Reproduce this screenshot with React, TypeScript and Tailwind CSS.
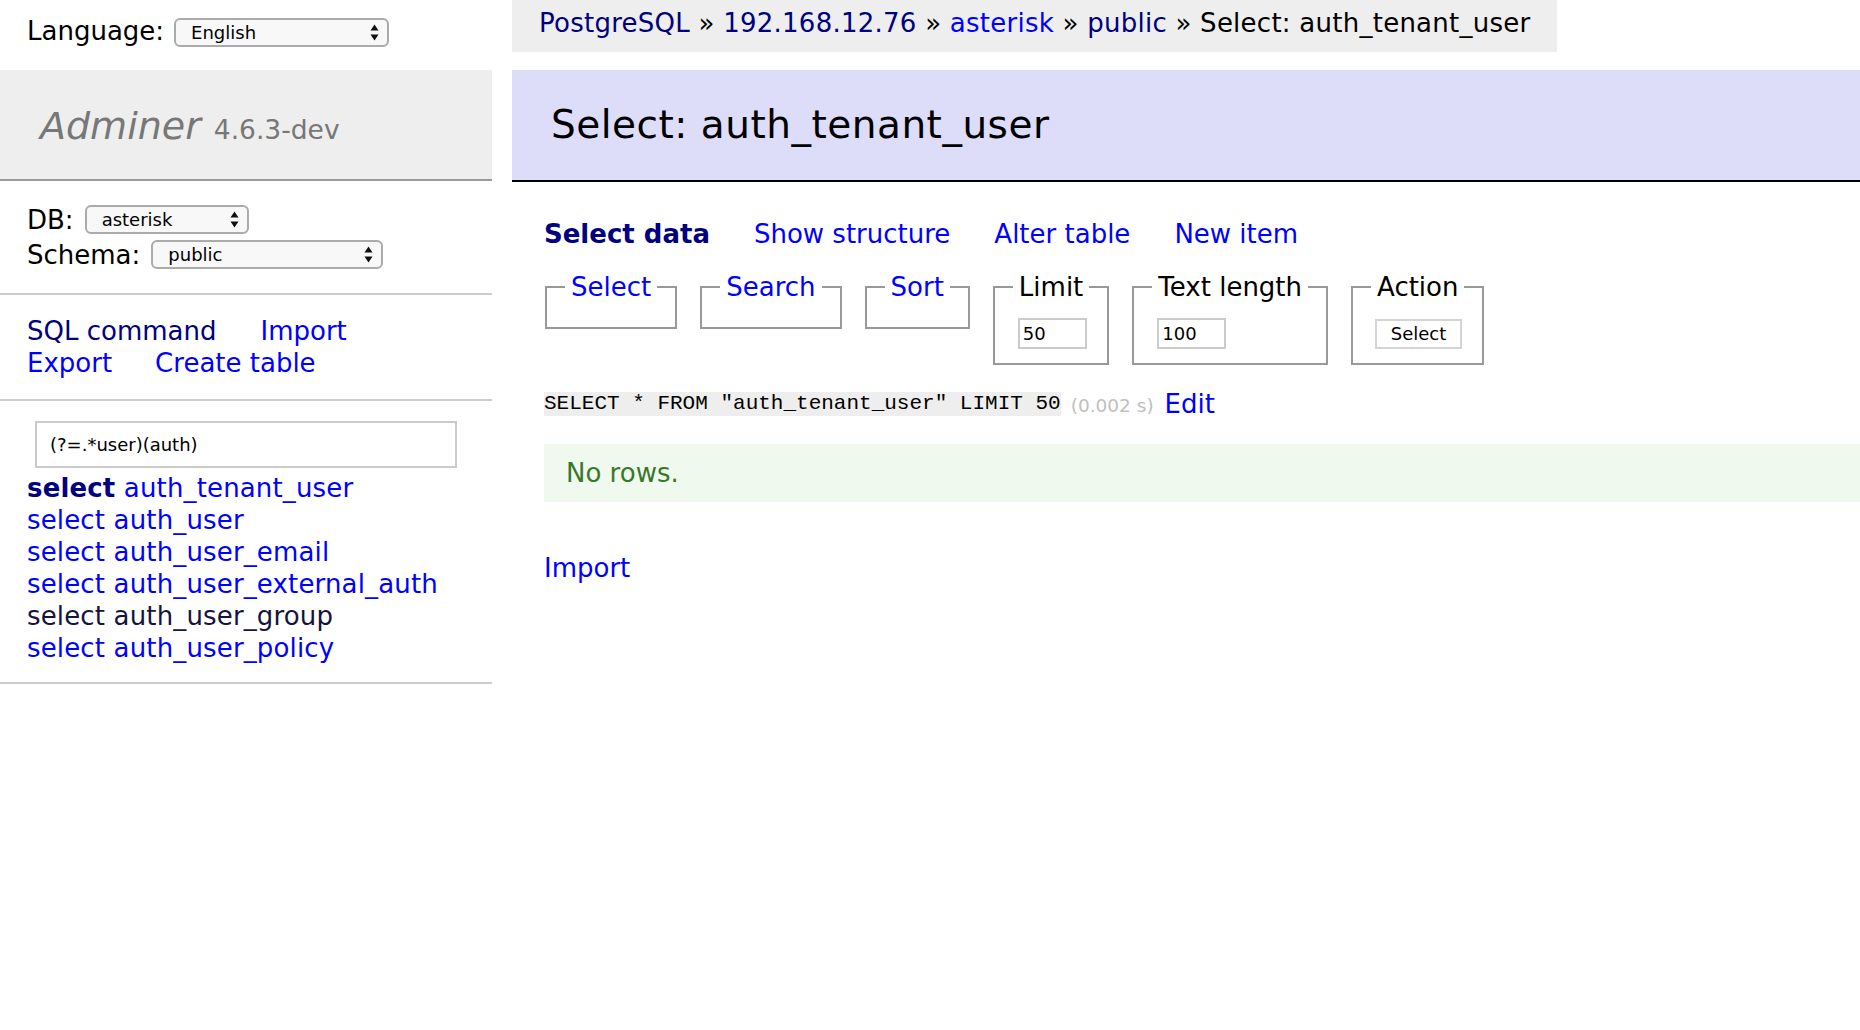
const Arrows = () => (
  <svg width="9" height="17" viewBox="0 0 9 17" className="shrink-0">
    <path d="M4.5 0.5 8.5 6.5H0.5z M0.5 10.5h8l-4 6z" fill="#111" />
  </svg>
);

function MacSelect({ value, className }: { value: string; className: string }) {
  return (
    <div
      className={`flex items-center justify-between h-[29px] rounded-[6px] border-2 border-[#ababab] bg-[#f8f8f8] pl-[15px] pr-[8px] text-[18px] leading-none text-black ${className}`}
    >
      <span>{value}</span>
      <Arrows />
    </div>
  );
}

function Box({ legend, link, children }: { legend: string; link?: boolean; children?: React.ReactNode }) {
  return (
    <fieldset className="border-2 border-[#999] px-[18px] py-[12px]">
      <legend className={`px-[6px] leading-[32px] ${link ? "text-[#0000ff]" : "text-black"}`}>{legend}</legend>
      {children}
    </fieldset>
  );
}

const tables = [
  { name: "auth_tenant_user", active: true },
  { name: "auth_user" },
  { name: "auth_user_email" },
  { name: "auth_user_external_auth" },
  { name: "auth_user_group", visited: true },
  { name: "auth_user_policy" },
];

export default function App() {
  return (
    <div className="flex min-h-[1030px] bg-white font-['DejaVu_Sans',Verdana,sans-serif] text-[26px] leading-[32px] text-black">
      {/* sidebar */}
      <div className="w-[492px] shrink-0">
        <div className="h-[70px] pt-[15px] pl-[27px] flex items-start gap-[10px]">
          <span>Language:</span>
          <MacSelect value="English" className="w-[215px] mt-[3px]" />
        </div>

        <div className="h-[111px] bg-[#eee] border-b-2 border-[#999] flex items-baseline pl-[40px] pt-[33px] text-[#777]">
          <span className="italic text-[38px] leading-[46px]">Adminer</span>
          <span className="ml-[13px] text-[26.5px]">4.6.3-dev</span>
        </div>

        <div className="pt-[21px] pb-[21px] pl-[27px] border-b-2 border-[#ccc]">
          <div className="h-[35px] flex items-center gap-[11px]">
            <span>DB:</span>
            <MacSelect value="asterisk" className="w-[164px]" />
          </div>
          <div className="h-[35px] flex items-center gap-[11px]">
            <span>Schema:</span>
            <MacSelect value="public" className="w-[232px]" />
          </div>
        </div>

        <div className="py-[20px] pl-[27px] border-b-2 border-[#ccc]">
          <div className="flex gap-[44px]">
            <span className="text-[#000080]">SQL command</span>
            <span className="text-[#0000ff]">Import</span>
          </div>
          <div className="flex gap-[43px]">
            <span className="text-[#0000ff]">Export</span>
            <span className="text-[#0000ff]">Create table</span>
          </div>
        </div>

        <div className="pt-[20px] pb-[18px] border-b-2 border-[#ccc]">
          <div className="ml-[35px] w-[422px] h-[47px] border-2 border-[#cbcbcb] flex items-center pl-[13px] text-[18px] leading-none">
            (?=.*user)(auth)
          </div>
          <ul className="mt-[4px] pl-[27px] tracking-[0.15px]">
            {tables.map((t) => (
              <li key={t.name} className="whitespace-nowrap">
                {t.active ? (
                  <span className="font-bold text-[#000080]">select</span>
                ) : (
                  <span className={t.visited ? "text-[#14143c]" : "text-[#0000ff]"}>select</span>
                )}{" "}
                <span className={t.visited ? "text-[#14143c]" : "text-[#0000ff]"}>{t.name}</span>
              </li>
            ))}
          </ul>
        </div>
      </div>

      {/* main */}
      <div className="flex-1 ml-[20px]">
        <div className="w-fit h-[52px] bg-[#eee] px-[27px] pt-[7px] whitespace-nowrap tracking-[0.25px]">
          <span className="text-[#000080]">PostgreSQL</span> » <span className="text-[#000080]">192.168.12.76</span> »{" "}
          <span className="text-[#0000ff]">asterisk</span> » <span className="text-[#000080]">public</span> » Select:
          auth_tenant_user
        </div>

        <div className="mt-[18px] h-[112px] bg-[#ddddfa] border-b-2 border-black flex items-center pl-[39px]">
          <h2 className="text-[39px] leading-[46px] tracking-[0.5px]">Select: auth_tenant_user</h2>
        </div>

        <div className="pl-[32px]">
          <div className="mt-[36px] flex gap-[44px]">
            <span className="font-bold text-[#000080]">Select data</span>
            <span className="text-[#0000ff]">Show structure</span>
            <span className="text-[#0000ff]">Alter table</span>
            <span className="text-[#0000ff]">New item</span>
          </div>

          <div className="mt-[21px] ml-[1px] flex items-start gap-[23px]">
            <Box legend="Select" link />
            <Box legend="Search" link />
            <Box legend="Sort" link />
            <Box legend="Limit">
              <div className="ml-[5px] mt-[3px] mb-[2px] w-[69px] h-[31px] border-2 border-[#ccc] pl-[3px] flex items-center text-[18px] leading-none">
                50
              </div>
            </Box>
            <Box legend="Text length">
              <div className="ml-[5px] mt-[3px] mb-[2px] w-[69px] h-[31px] border-2 border-[#ccc] pl-[3px] flex items-center text-[18px] leading-none">
                100
              </div>
            </Box>
            <Box legend="Action">
              <div className="ml-[4px] mt-[4px] mb-[2px] w-[87px] h-[30px] border-2 border-[#d4d4d4] bg-white flex items-center justify-center text-[18px] leading-none">
                Select
              </div>
            </Box>
          </div>

          <div className="mt-[23px] h-[32px] flex items-center whitespace-nowrap">
            <code className="h-[24px] bg-[#eee] font-['Liberation_Mono',monospace] text-[21px] leading-[24px] text-black">
              SELECT * FROM "auth_tenant_user" LIMIT 50
            </code>
            <span className="ml-[10px] mt-[3px] text-[18.5px] text-[#c0c0c0]">(0.002 s)</span>
            <span className="ml-[11px] text-[#0000ff]">Edit</span>
          </div>
        </div>

        <div className="mt-[24px] ml-[32px] h-[58px] bg-[#f0f9ee] flex items-center pl-[22px] text-[#38782a]">No rows.</div>

        <div className="mt-[50px] pl-[32px] text-[#0000ff]">Import</div>
      </div>
    </div>
  );
}
